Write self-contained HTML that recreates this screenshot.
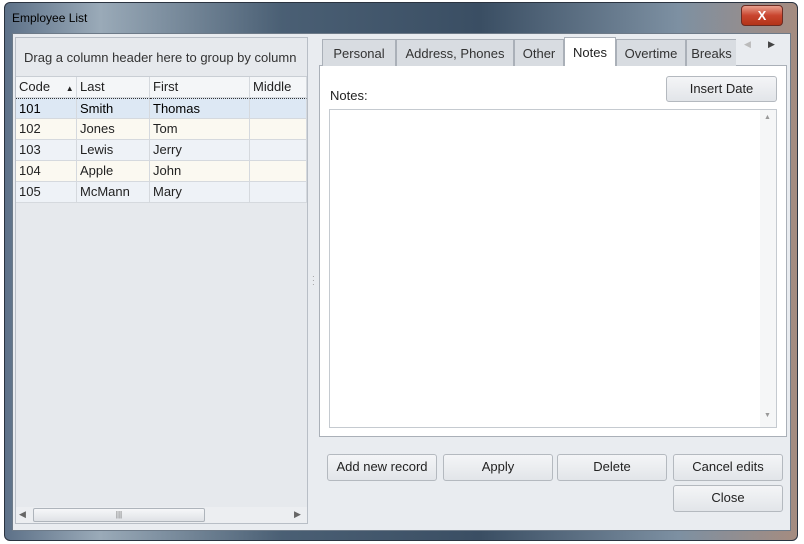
<!DOCTYPE html>
<html><head><style>
body{margin:0;width:804px;height:544px;background:#fff;font-family:"Liberation Sans",sans-serif;font-size:13px;color:#222;position:relative;overflow:hidden}
div{position:absolute;box-sizing:border-box}
.frame{left:4px;top:2px;width:794px;height:539px;border:1px solid #2a3340;border-radius:6px;background:linear-gradient(90deg,#5d7188 0%,#9aaab8 12%,#4a5f74 35%,#3a4e63 60%,#7d90a2 85%,#a58c80 100%)}
.client{left:12px;top:33px;width:779px;height:498px;background:#e9ecf0;border:1px solid #6d7a88}
.btn{background:linear-gradient(#f4f5f7,#e2e5e9);border:1px solid #b4b9bf;border-radius:3px;text-align:center;line-height:24px;color:#222;font-size:13px}
.cell{border-right:1px solid #d5d9de;border-bottom:1px solid #d5d9de;padding-left:3px;line-height:20px;height:21px}
.tab{top:39px;height:27px;background:#d8dce1;border:1px solid #aab0b8;border-bottom:none;line-height:27px;text-align:center;color:#333}
</style></head><body>
<div class="frame"></div>
<div style="left:12px;top:11px;font-size:12px;color:#000">Employee List</div>
<div style="left:741px;top:5px;width:42px;height:21px;border:1px solid #6b2b22;border-radius:4px;background:linear-gradient(#e8a08e,#c9452e 50%,#b23418);color:#fff;text-align:center;font-weight:bold;line-height:19px;font-size:13px">X</div>
<div class="client"></div>
<!-- grid -->
<div style="left:15px;top:37px;width:293px;height:487px;border:1px solid #b8bec6;background:#e6e9ed"></div>
<div style="left:24px;top:50px;color:#333">Drag a column header here to group by column</div>
<div style="left:16px;top:76px;width:291px;height:22px;background:#f4f6f8;border-top:1px solid #c9ced4"></div>
<div class="cell" style="left:16px;top:77px;width:61px;background:#f4f6f8">Code <span style="font-size:8px;margin-left:12px">▲</span></div>
<div class="cell" style="left:77px;top:77px;width:73px;background:#f4f6f8">Last</div>
<div class="cell" style="left:150px;top:77px;width:100px;background:#f4f6f8">First</div>
<div class="cell" style="left:250px;top:77px;width:57px;background:#f4f6f8">Middle</div>

<div class="cell" style="left:16px;top:98px;width:61px;background:#dde8f4;color:#000;border-top:1px dotted #333">101</div>
<div class="cell" style="left:77px;top:98px;width:73px;background:#dde8f4;color:#000;border-top:1px dotted #333">Smith</div>
<div class="cell" style="left:150px;top:98px;width:100px;background:#dde8f4;color:#000;border-top:1px dotted #333">Thomas</div>
<div class="cell" style="left:250px;top:98px;width:57px;background:#dde8f4;border-top:1px dotted #333"></div>

<div class="cell" style="left:16px;top:119px;width:61px;background:#fbf9f1">102</div>
<div class="cell" style="left:77px;top:119px;width:73px;background:#fbf9f1">Jones</div>
<div class="cell" style="left:150px;top:119px;width:100px;background:#fbf9f1">Tom</div>
<div class="cell" style="left:250px;top:119px;width:57px;background:#fbf9f1"></div>

<div class="cell" style="left:16px;top:140px;width:61px;background:#eef2f7">103</div>
<div class="cell" style="left:77px;top:140px;width:73px;background:#eef2f7">Lewis</div>
<div class="cell" style="left:150px;top:140px;width:100px;background:#eef2f7">Jerry</div>
<div class="cell" style="left:250px;top:140px;width:57px;background:#eef2f7"></div>

<div class="cell" style="left:16px;top:161px;width:61px;background:#fbf9f1">104</div>
<div class="cell" style="left:77px;top:161px;width:73px;background:#fbf9f1">Apple</div>
<div class="cell" style="left:150px;top:161px;width:100px;background:#fbf9f1">John</div>
<div class="cell" style="left:250px;top:161px;width:57px;background:#fbf9f1"></div>

<div class="cell" style="left:16px;top:182px;width:61px;background:#eef2f7">105</div>
<div class="cell" style="left:77px;top:182px;width:73px;background:#eef2f7">McMann</div>
<div class="cell" style="left:150px;top:182px;width:100px;background:#eef2f7">Mary</div>
<div class="cell" style="left:250px;top:182px;width:57px;background:#eef2f7"></div>

<div style="left:16px;top:507px;width:291px;height:16px;background:#eceef1"></div>
<div style="left:19px;top:509px;font-size:9px;color:#666">◀</div>
<div style="left:33px;top:508px;width:172px;height:14px;border:1px solid #aeb4bb;border-radius:2px;background:linear-gradient(#f6f7f9,#dfe2e6);text-align:center;font-size:8px;line-height:12px;color:#666">|||</div>
<div style="left:294px;top:509px;font-size:9px;color:#666">▶</div>
<div style="left:312px;top:275px;font-size:8px;color:#888;line-height:4px">·<br>·<br>·</div>
<!-- tabs -->
<div style="left:319px;top:65px;width:468px;height:372px;background:#fff;border:1px solid #aab0b8"></div>
<div class="tab" style="left:322px;width:74px">Personal</div>
<div class="tab" style="left:396px;width:118px">Address, Phones</div>
<div class="tab" style="left:514px;width:50px">Other</div>
<div class="tab" style="left:564px;width:52px;top:37px;height:29px;background:#fff;line-height:29px;color:#222">Notes</div>
<div class="tab" style="left:616px;width:70px">Overtime</div>
<div class="tab" style="left:686px;width:50px;border-right:none">Breaks</div>
<div style="left:744px;top:39px;font-size:9px;color:#bbb">◀</div>
<div style="left:768px;top:39px;font-size:9px;color:#444">▶</div>
<div style="left:330px;top:88px">Notes:</div>
<div class="btn" style="left:666px;top:76px;width:111px;height:26px">Insert Date</div>
<div style="left:329px;top:109px;width:448px;height:319px;border:1px solid #c5cad0;background:#fff"></div>
<div style="left:760px;top:110px;width:16px;height:317px;background:#f5f6f7"></div>
<div style="left:764px;top:114px;font-size:7px;color:#999">▲</div>
<div style="left:764px;top:412px;font-size:7px;color:#999">▼</div>
<!-- buttons -->
<div class="btn" style="left:327px;top:454px;width:110px;height:27px">Add new record</div>
<div class="btn" style="left:443px;top:454px;width:110px;height:27px">Apply</div>
<div class="btn" style="left:557px;top:454px;width:110px;height:27px">Delete</div>
<div class="btn" style="left:673px;top:454px;width:110px;height:27px">Cancel edits</div>
<div class="btn" style="left:673px;top:485px;width:110px;height:27px">Close</div>
</body></html>
